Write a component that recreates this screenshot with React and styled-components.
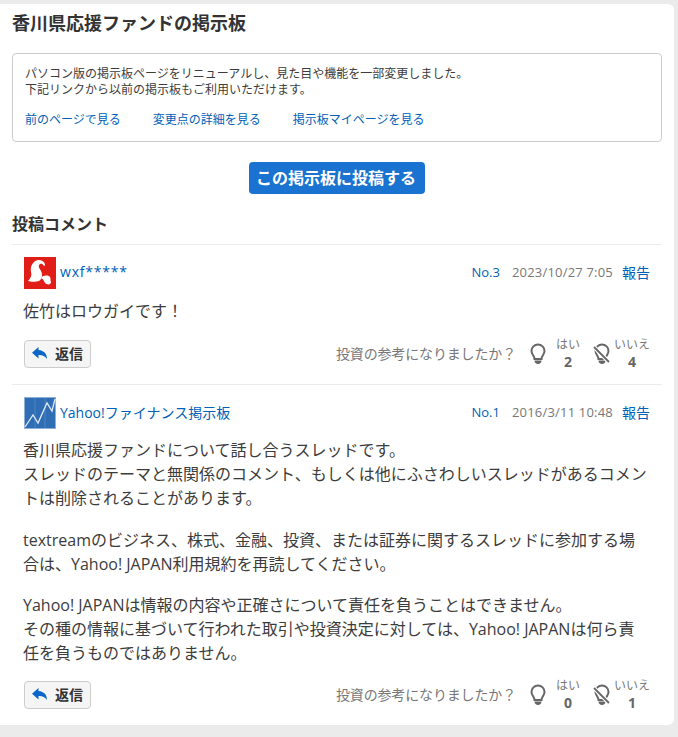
import styled, { createGlobalStyle } from "styled-components";

const GlobalStyle = createGlobalStyle`
  html, body { margin: 0; padding: 0; background: #ebebeb; }
  body { font-family: "Open Sans", "Noto Sans CJK JP", sans-serif; color: #333; }
  * { box-sizing: border-box; }
`;

const Page = styled.div`
  width: 674px;
  margin-top: 4px;
  padding: 11px 12px 0;
  height: 721px;
  background: #fff;
  border-radius: 0 6px 6px 0;
`;

const Title = styled.h1`
  margin: 0;
  height: 38px;
  font-size: 18px;
  line-height: 16px;
  font-weight: 700;
  color: #333;
`;

const Notice = styled.div`
  height: 89px;
  padding: 12px 12px 0;
  border: 1px solid #ccc;
  border-radius: 4px;
  font-size: 12px;
  line-height: 16px;
  color: #3c3c3c;
`;

const NoticeLinks = styled.div`
  display: flex;
  gap: 32px;
  margin-top: 14px;
`;

const TextLink = styled.a`
  color: #005fb8;
  text-decoration: none;
`;

const PostRow = styled.div`
  display: flex;
  justify-content: center;
  margin-top: 20px;
`;

const PostButton = styled.button`
  width: 176px;
  height: 32px;
  padding: 0 2px 0 0;
  border: 0;
  border-radius: 4px;
  background: #1a73d0;
  color: #fff;
  font: 700 16px/32px "Open Sans", "Noto Sans CJK JP", sans-serif;
`;

const SectionTitle = styled.h2`
  margin: 20px 0 0;
  height: 30px;
  font-size: 16px;
  line-height: 20px;
  font-weight: 700;
`;

const Comment = styled.article`
  border-top: 1px solid #ebebeb;
  padding: 12px 12px 0;
  height: ${(p) => p.$height}px;
`;

const CommentHead = styled.div`
  display: flex;
  align-items: center;
  height: 32px;
`;

const Avatar = styled.svg`
  width: 32px;
  height: 32px;
  flex: none;
  margin-right: 4px;
`;

const UserName = styled(TextLink)`
  flex: 1;
  margin-top: -3px;
  font-size: 14px;
  letter-spacing: ${(p) => (p.$masked ? "0.8px" : "0")};
`;

const Meta = styled.div`
  display: flex;
  align-items: center;
  margin-top: -2px;
  font-size: 13px;
`;

const CommentNo = styled(TextLink)`
  margin-right: 12px;
`;

const CommentDate = styled.span`
  margin-right: 9px;
  color: #777;
  letter-spacing: 0.2px;
`;

const Report = styled(TextLink)`
  font-size: 14px;
`;

const Body = styled.div`
  margin: ${(p) => p.$top}px 0 0 -1px;
  font-size: 16px;
  line-height: 24px;
  color: #3c3c3c;
`;

const Para = styled.p`
  margin: 0 0 17.5px;
  &:last-child { margin-bottom: 0; }
`;

const Actions = styled.div`
  display: flex;
  align-items: center;
  justify-content: space-between;
  margin-top: ${(p) => p.$top}px;
  height: 28px;
`;

const ReplyButton = styled.button`
  display: flex;
  align-items: center;
  gap: 7px;
  width: 67px;
  height: 28px;
  padding: 0 0 2px 7px;
  border: 1px solid #ccc;
  border-radius: 4px;
  background: #f5f5f5;
  color: #333;
  font: 700 14px "Open Sans", "Noto Sans CJK JP", sans-serif;
`;

const Votes = styled.div`
  display: flex;
  align-items: center;
  color: #777;
`;

const VoteLabel = styled.span`
  margin: -3px 12px 0 0;
  font-size: 14px;
  letter-spacing: -0.15px;
`;

const VoteIcon = styled.svg`
  width: 20px;
  height: 24px;
  margin-right: ${(p) => p.$gap}px;
`;

const VoteCount = styled.div`
  display: flex;
  flex-direction: column;
  align-items: center;
  width: ${(p) => p.$width}px;
  margin-right: ${(p) => p.$gap}px;
  font-size: 12px;
  line-height: 16px;
  & > b { font-size: 14px; line-height: 18px; color: #666; }
`;

const RedAvatar = () => (
  <Avatar viewBox="0 0 32 32">
    <rect width="32" height="32" fill="#e01e17" />
    <path d="M4 24c3-3 4-6 3-9-1-6 2-11 7-12 4 0 7 2 7 5 0 1-1 1-2 0-1-2-3-1-4 0-1 2 1 4 2 6 2 4 1 8-2 10-3 1-8 1-11 0z" fill="#fff" />
    <path d="M17 21c2-3 7-3 9-1 1 2 0 3 1 5 0 3-4 3-6 1-1-2-1-3-4-5z" fill="#fff" />
  </Avatar>
);

const ChartAvatar = () => (
  <Avatar viewBox="0 0 32 32">
    <rect x="0.5" y="0.5" width="31" height="31" fill="#2f6db5" stroke="#8fb0d6" />
    <path d="M11 1v30M21 1v30" stroke="#4d85c4" strokeWidth="1" />
    <path d="M1 30 9 18l5 8 9-20 5 8 3-12" fill="none" stroke="#dfe9f5" strokeWidth="1.3" />
  </Avatar>
);

const ReplyIcon = () => (
  <svg width="16" height="14" viewBox="0 0 16 14">
    <path d="M6.500 1 0 6.700 6.500 12.500V9c3.500-.3 6.500 1 8.500 4 0-5-3-8.500-8.500-9z" fill="#0a66c8" />
  </svg>
);

const Bulb = ({ off }) => (
  <VoteIcon viewBox="0 0 20 24" $gap={off ? 2 : 7}>
    <path d="M6.500 17c0-3-3-4.500-3-8a6.500 6.500 0 0 1 13 0c0 3.500-3 5-3 8z" fill="none" stroke="#666" strokeWidth="2" />
    <path d="M6.500 18.500h7c0 2-1.500 3.500-3.500 3.500s-3.500-1.500-3.500-3.500z" fill="#666" />
    {off && <path d="M2 5l15 15" stroke="#fff" strokeWidth="4" />}
    {off && <path d="M2 5l15 15" stroke="#666" strokeWidth="1.800" />}
  </VoteIcon>
);

const VoteBox = ({ yes, no }) => (
  <Votes>
    <VoteLabel>投資の参考になりましたか？</VoteLabel>
    <Bulb />
    <VoteCount $width={26} $gap={11}>はい<b>{yes}</b></VoteCount>
    <Bulb off />
    <VoteCount $width={36} $gap={0}>いいえ<b>{no}</b></VoteCount>
  </Votes>
);

export default function App() {
  return (
    <>
      <GlobalStyle />
      <Page>
        <Title>香川県応援ファンドの掲示板</Title>
        <Notice>
          パソコン版の掲示板ページをリニューアルし、見た目や機能を一部変更しました。<br />
          下記リンクから以前の掲示板もご利用いただけます。
          <NoticeLinks>
            <TextLink>前のページで見る</TextLink>
            <TextLink>変更点の詳細を見る</TextLink>
            <TextLink>掲示板マイページを見る</TextLink>
          </NoticeLinks>
        </Notice>
        <PostRow><PostButton>この掲示板に投稿する</PostButton></PostRow>
        <SectionTitle>投稿コメント</SectionTitle>
        <Comment $height={140}>
          <CommentHead>
            <RedAvatar />
            <UserName $masked>wxf*****</UserName>
            <Meta>
              <CommentNo>No.3</CommentNo>
              <CommentDate>2023/10/27 7:05</CommentDate>
              <Report>報告</Report>
            </Meta>
          </CommentHead>
          <Body $top={10}>
            <Para>佐竹はロウガイです！</Para>
          </Body>
          <Actions $top={17}>
            <ReplyButton><ReplyIcon />返信</ReplyButton>
            <VoteBox yes={2} no={4} />
          </Actions>
        </Comment>
        <Comment $height={340}>
          <CommentHead>
            <ChartAvatar />
            <UserName>Yahoo!ファイナンス掲示板</UserName>
            <Meta>
              <CommentNo>No.1</CommentNo>
              <CommentDate>2016/3/11 10:48</CommentDate>
              <Report>報告</Report>
            </Meta>
          </CommentHead>
          <Body $top={9}>
            <Para>
              香川県応援ファンドについて話し合うスレッドです。<br />
              スレッドのテーマと無関係のコメント、もしくは他にふさわしいスレッドがあるコメントは削除されることがあります。
            </Para>
            <Para>textreamのビジネス、株式、金融、投資、または証券に関するスレッドに参加する場合は、Yahoo! JAPAN利用規約を再読してください。</Para>
            <Para>
              Yahoo! JAPANは情報の内容や正確さについて責任を負うことはできません。<br />
              その種の情報に基づいて行われた取引や投資決定に対しては、Yahoo! JAPANは何ら責任を負うものではありません。
            </Para>
          </Body>
          <Actions $top={16}>
            <ReplyButton><ReplyIcon />返信</ReplyButton>
            <VoteBox yes={0} no={1} />
          </Actions>
        </Comment>
      </Page>
    </>
  );
}
